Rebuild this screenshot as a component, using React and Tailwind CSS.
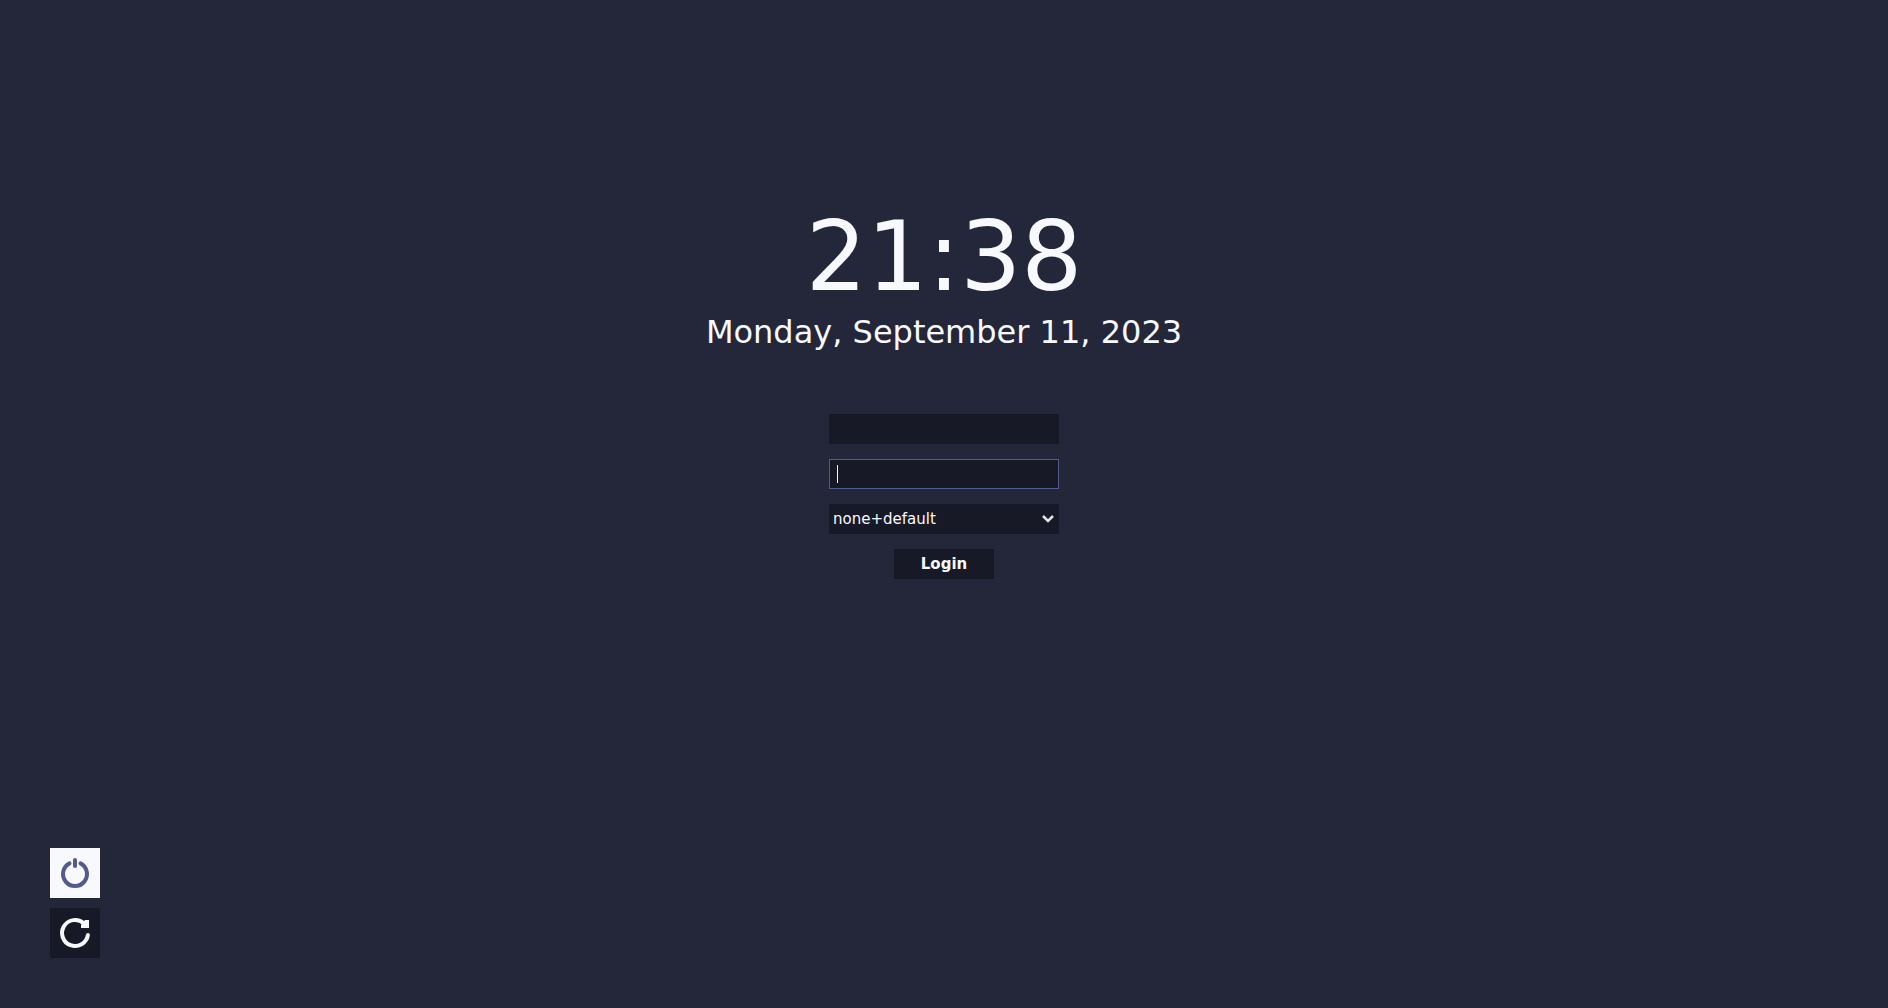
function PowerIcon() {
  return (
    <svg viewBox="0 0 50 50" className="size-full" fill="none" stroke="currentColor" strokeWidth="4" strokeLinecap="round" aria-hidden="true">
      <path d="M25 12v6" />
      <path d="M19.5 15.4a12 12 0 1 0 11 0" />
    </svg>
  );
}

function RestartIcon() {
  return (
    <svg viewBox="0 0 50 50" className="size-full" fill="none" stroke="currentColor" strokeWidth="4" strokeLinecap="round" aria-hidden="true">
      <path d="M37.9 27A13 13 0 1 1 34 15.6" />
      <path d="M39 12v8h-8v-3l4-5z" fill="currentColor" stroke="none" />
    </svg>
  );
}

const field = "block h-[30px] w-full bg-[#181926] px-2 text-[15px] text-[#f8f8ff] outline-none";

export default function App() {
  return (
    <div className="flex min-h-screen flex-col justify-between bg-[#24263a] font-['DejaVu_Sans',sans-serif] text-[#f8f8ff]">
      <main className="flex flex-col items-center pt-[201px]">
        <time className="text-[96px] leading-[112px]">21:38</time>
        <p className="text-[32px] leading-[38px]">Monday, September 11, 2023</p>

        <form className="mt-[63px] flex w-[230px] flex-col items-center gap-[15px]" onSubmit={(e) => e.preventDefault()}>
          <input type="text" aria-label="Username" className={field} />
          <div className="relative w-full">
            <input type="password" aria-label="Password" className={field + " border border-[#535a8c] caret-transparent"} />
            <span className="pointer-events-none absolute inset-y-1.5 left-2 w-px bg-[#f8f8ff]" />
          </div>
          <div className="relative w-full">
            <select aria-label="Session" className="block h-[30px] w-full appearance-none bg-[#181926] px-1 text-[15px] outline-none">
              <option>none+default</option>
            </select>
            <svg viewBox="0 0 12 8" className="pointer-events-none absolute top-[11px] right-[5px] h-2 w-3" fill="none" stroke="#e3e3e6" strokeWidth="2.5" aria-hidden="true">
              <path d="M1 1l5 5 5-5" />
            </svg>
          </div>
          <button type="submit" className="h-[30px] w-[100px] bg-[#181926] text-[15px] font-bold">Login</button>
        </form>
      </main>

      <footer className="flex flex-col items-start gap-2.5 p-[50px]">
        <button type="button" aria-label="Power off" className="size-[50px] bg-[#f8f8ff] text-[#535a8c]">
          <PowerIcon />
        </button>
        <button type="button" aria-label="Restart" className="size-[50px] bg-[#181926] text-[#f8f8ff]">
          <RestartIcon />
        </button>
      </footer>
    </div>
  );
}
